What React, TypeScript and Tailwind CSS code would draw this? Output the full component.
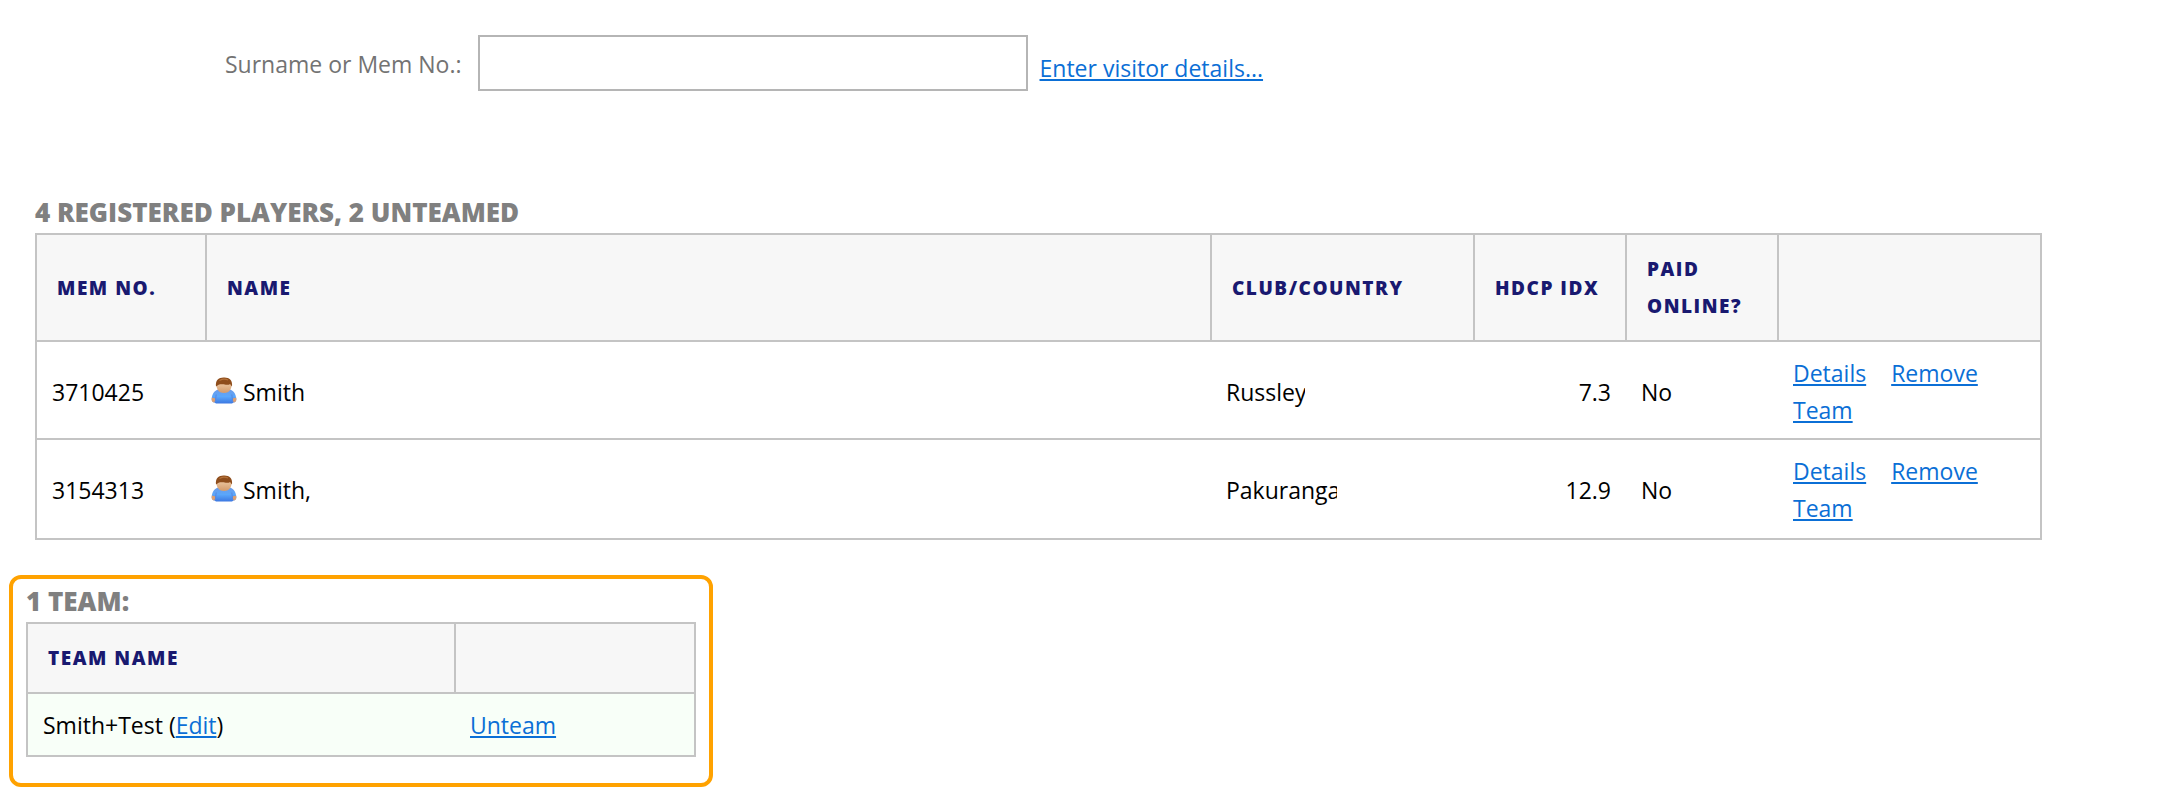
import type { ReactNode } from 'react'
import clsx from 'clsx'

interface Player {
  memNo: string
  name: string
  club: string
  clubWidth: string
  handicap: string
  paid: string
}

const players: Player[] = [
  { memNo: '3710425', name: 'Smith', club: 'Russley', clubWidth: 'w-[79px]', handicap: '7.3', paid: 'No' },
  { memNo: '3154313', name: 'Smith,', club: 'Pakuranga', clubWidth: 'w-[111px]', handicap: '12.9', paid: 'No' },
]

function TextLink({ children }: { children: ReactNode }) {
  return (
    <a href="#" className="text-[#0b6fd6] underline decoration-2 underline-offset-2">
      {children}
    </a>
  )
}

function HeadCell({ className, children }: { className?: string; children?: ReactNode }) {
  return (
    <th
      className={clsx(
        'border-2 border-[#c4c4c4] bg-[#f7f7f7] px-5 pt-4 pb-[15px] text-left align-middle text-[19px] leading-[37px] font-extrabold tracking-[0.08em] text-[#191970] uppercase',
        className
      )}
    >
      {children}
    </th>
  )
}

function SectionTitle({ children }: { children: ReactNode }) {
  return <h2 className="text-[26px] leading-[42px] font-extrabold text-[#808080] uppercase">{children}</h2>
}

function UserIcon() {
  return (
    <svg viewBox="0 0 26 27" className="mr-1.5 mb-1 h-[27px] w-[26px] shrink-0" aria-hidden="true">
      <defs>
        <linearGradient id="shirt" x1="0" y1="0" x2="0" y2="1">
          <stop offset="0" stopColor="#6d9be8" />
          <stop offset="0.5" stopColor="#5aa7fb" />
          <stop offset="1" stopColor="#3c78e2" />
        </linearGradient>
        <linearGradient id="face" x1="0" y1="0" x2="0" y2="1">
          <stop offset="0" stopColor="#f8dcbb" />
          <stop offset="1" stopColor="#d39a6a" />
        </linearGradient>
      </defs>
      <path d="M7.5 12.5C4 13 1.2 16.5.7 21.5c-.2 2.4.8 3.9 2.8 3.9L5 26.5h16l1.5-1.1c2 0 3-1.5 2.8-3.9-.5-5-3.3-8.5-6.8-9z" fill="url(#shirt)" />
      <path d="M.9 20.5c-.8 2.7 0 4.9 2.5 5.1l1.2-4.2z" fill="#dda071" />
      <path d="M25.1 20.5c.8 2.7 0 4.9-2.5 5.1l-1.2-4.2z" fill="#dda071" />
      <path d="M5.2 17.5 4.3 25M20.8 17.5l.9 7.5" stroke="#5b86dc" strokeWidth="1" fill="none" />
      <path d="M8 13c1.5 3.6 8.5 3.6 10 0l-2-1.5h-6z" fill="#7dbcff" />
      <path d="M5.4 7.5C5.4 3 8.5.7 13 .7s7.600 2.300 7.600 6.800c0 5-3 8.500-7.600 8.500S5.400 12.500 5.400 7.500z" fill="url(#face)" />
      <path d="M5 9.500C4.200 3.500 7.200.4 13 .4s8.800 3.100 8 9.100c-.8-.9-1.400-1.700-1.900-2.500-1.200.8-2.600 1-4.300.7-3-.6-5.600-.6-7.100 0-.8.4-1.500.8-2.700 1.800z" fill="#8e4d1c" />
      <path d="M8.500 3.600C10.500 1.800 14.500 1.500 17 3" stroke="#b4723a" strokeWidth="1.200" fill="none" />
    </svg>
  )
}

function SearchRow() {
  return (
    <form className="flex h-14 items-center pl-[190px]" onSubmit={(e) => e.preventDefault()}>
      <label htmlFor="member-search" className="mr-4 pt-0.5 text-[#737373]">
        Surname or Mem No.:
      </label>
      <input id="member-search" type="text" className="mr-3 h-14 w-[550px] border-2 border-[#b5b5b5] bg-white px-3" />
      <span className="pt-2.5">
        <TextLink>Enter visitor details...</TextLink>
      </span>
    </form>
  )
}

function PlayersTable() {
  return (
    <table className="w-full table-fixed border-collapse border-2 border-[#c4c4c4]">
      <thead>
        <tr>
          <HeadCell className="w-[170px]">Mem No.</HeadCell>
          <HeadCell>Name</HeadCell>
          <HeadCell className="w-[263px]">Club/Country</HeadCell>
          <HeadCell className="w-[152px] whitespace-nowrap">Hdcp Idx</HeadCell>
          <HeadCell className="w-[152px]">Paid Online?</HeadCell>
          <HeadCell className="w-[263px]" />
        </tr>
      </thead>
      <tbody>
        {players.map((player) => (
          <tr key={player.memNo} className="border-b-2 border-[#c4c4c4] *:px-[15px] *:pt-[13px] *:pb-[9px] last:*:pb-[11px]">
            <td>{player.memNo}</td>
            <td>
              <div className="-ml-2.5 flex items-center">
                <UserIcon />
                {player.name}
              </div>
            </td>
            <td>
              <div className={clsx('overflow-hidden', player.clubWidth)}>{player.club}</div>
            </td>
            <td className="text-right">{player.handicap}</td>
            <td>{player.paid}</td>
            <td>
              <div className="flex flex-wrap gap-x-[25px]">
                <TextLink>Details</TextLink>
                <TextLink>Remove</TextLink>
                <TextLink>Team</TextLink>
              </div>
            </td>
          </tr>
        ))}
      </tbody>
    </table>
  )
}

function TeamsTable() {
  return (
    <table className="w-full table-fixed border-collapse border-2 border-[#c4c4c4]">
      <thead>
        <tr>
          <HeadCell>Team Name</HeadCell>
          <HeadCell className="w-[240px]" />
        </tr>
      </thead>
      <tbody>
        <tr className="bg-[#f8fff8] *:px-[15px] *:pt-[13px] *:pb-[11px]">
          <td>
            Smith+Test (<TextLink>Edit</TextLink>)
          </td>
          <td>
            <TextLink>Unteam</TextLink>
          </td>
        </tr>
      </tbody>
    </table>
  )
}

export default function App() {
  return (
    <main className="bg-white pt-[35px] pb-4 font-['Open_Sans','Liberation_Sans',sans-serif] text-[23px] leading-[37px] text-black">
      <div className="mr-[117px] ml-[35px]">
        <SearchRow />
        <section className="mt-[100px]">
          <SectionTitle>4 registered players, 2 unteamed</SectionTitle>
          <PlayersTable />
        </section>
      </div>
      <section className="mt-[35px] ml-[9px] w-[704px] max-w-full rounded-xl border-4 border-[#ffa200] px-[13px] pt-px pb-[26px]">
        <SectionTitle>1 team:</SectionTitle>
        <TeamsTable />
      </section>
    </main>
  )
}
